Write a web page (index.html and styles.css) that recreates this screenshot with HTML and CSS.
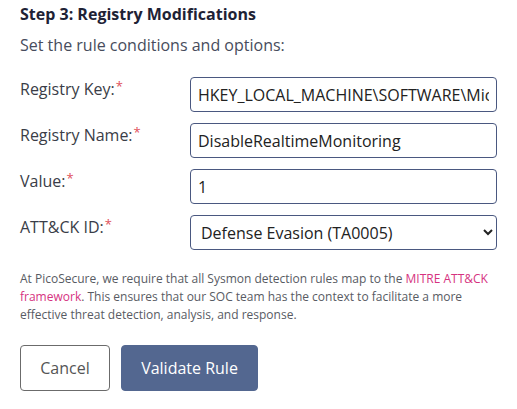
FILE: index.html
```html
<!DOCTYPE html>
<html>
<head>
<meta charset="utf-8">
<link rel="stylesheet" href="styles.css">
</head>
<body>
<div class="page">
  <h3 class="title">Step 3: Registry Modifications</h3>
  <p class="subtitle">Set the rule conditions and options:</p>
  <div class="form">
    <label class="label">Registry Key:<span class="req">*</span></label>
    <input class="field" type="text" value="HKEY_LOCAL_MACHINE\SOFTWARE\Microsoft\Windows Defender\Real-Time Protection">
    <label class="label">Registry Name:<span class="req">*</span></label>
    <input class="field" type="text" value="DisableRealtimeMonitoring">
    <label class="label">Value:<span class="req">*</span></label>
    <input class="field" type="text" value="1">
    <label class="label">ATT&amp;CK ID:<span class="req">*</span></label>
    <select class="field select">
      <option>Defense Evasion (TA0005)</option>
    </select>
  </div>
  <p class="note">At PicoSecure, we require that all Sysmon detection rules map to the <a class="link" href="#">MITRE ATT&amp;CK framework</a>. This ensures that our SOC team has the context to facilitate a more effective threat detection, analysis, and response.</p>
  <div class="actions">
    <button class="btn btn-cancel" type="button">Cancel</button>
    <button class="btn btn-primary" type="button">Validate Rule</button>
  </div>
</div>
</body>
</html>
```
FILE: styles.css
```css
* { box-sizing: border-box; }
html, body { margin: 0; padding: 0; background: #fff; }
body { font-family: "Open Sans", "Liberation Sans", sans-serif; color: #333; }
.page { padding: 2px 20px 0 20px; width: 517px; }
.title { margin: 0; font-size: 16px; line-height: 24px; font-weight: 700; color: #1e2235; }
.subtitle { margin: 7px 0 0 0; font-size: 16px; line-height: 24px; color: #474c5c; }
.form {
  margin-top: 20px;
  display: grid;
  grid-template-columns: 170px 307px;
  row-gap: 11px;
  align-items: start;
}
.label { font-size: 16px; line-height: 24px; color: #3a3d47; }
.req { color: #e0505a; font-size: 13px; vertical-align: top; position: relative; top: -3px; margin-left: 1px; }
.field {
  height: 35px;
  width: 307px;
  border: 1px solid #4a5880;
  border-radius: 4px;
  padding: 4px 7px;
  font-family: "Open Sans", "Liberation Sans", sans-serif;
  font-size: 16px;
  line-height: 24px;
  color: #222;
  background: #fff;
}
.select { padding: 4px 6px; }
.note { margin: 20px 0 0 0; font-size: 12px; line-height: 18px; color: #585b63; }
.link { color: #d6337f; text-decoration: none; }
.actions { display: flex; gap: 11px; margin-top: 21px; }
.btn {
  height: 46px;
  border-radius: 4px;
  font-family: "Open Sans", "Liberation Sans", sans-serif;
  font-size: 16px;
  padding: 0;
  white-space: nowrap;
}
.btn-cancel { width: 90px; background: #fff; border: 1px solid #6b6b6b; color: #555; }
.btn-primary { width: 137px; background: #536790; border: 1px solid #536790; color: #fff; }
```
